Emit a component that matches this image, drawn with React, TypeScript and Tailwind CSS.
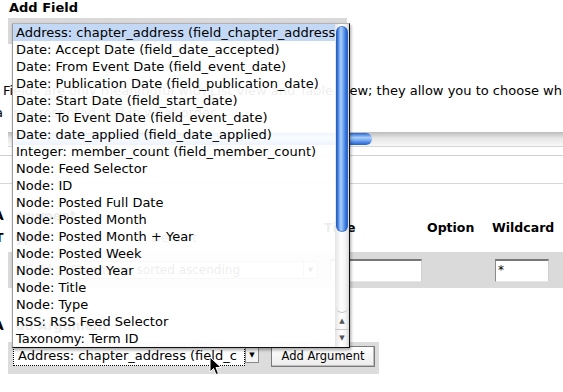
const items = [
  'Address: chapter_address (field_chapter_address)',
  'Date: Accept Date (field_date_accepted)',
  'Date: From Event Date (field_event_date)',
  'Date: Publication Date (field_publication_date)',
  'Date: Start Date (field_start_date)',
  'Date: To Event Date (field_event_date)',
  'Date: date_applied (field_date_applied)',
  'Integer: member_count (field_member_count)',
  'Node: Feed Selector',
  'Node: ID',
  'Node: Posted Full Date',
  'Node: Posted Month',
  'Node: Posted Month + Year',
  'Node: Posted Week',
  'Node: Posted Year',
  'Node: Title',
  'Node: Type',
  'RSS: RSS Feed Selector',
  'Taxonomy: Term ID',
]

const aquaV =
  'bg-[linear-gradient(to_right,#2a62cc_0%,#5f98ea_18%,#acccf8_38%,#7fb0f2_58%,#3f7fe0_82%,#2860c8_100%)]'
const aquaH =
  'bg-[linear-gradient(to_bottom,#2a62cc_0%,#5f98ea_18%,#acccf8_38%,#7fb0f2_58%,#3f7fe0_82%,#2860c8_100%)]'

const inset =
  'bg-white border-t-2 border-l border-t-[#777] border-l-[#8a8a8a] border-r border-b border-r-[#cfcfcf] border-b-[#e6e6e6]'

function Cursor() {
  return (
    <svg className="absolute left-[209px] top-[356px]" width="13" height="20" viewBox="0 0 13 20">
      <path d="M1 1 L1 16 L4.5 12.5 L7 18.5 L9.5 17.5 L7 11.5 L12 11.5 Z" fill="#000" stroke="#fff" strokeWidth="1" strokeLinejoin="round" />
    </svg>
  )
}

function ListPopup() {
  return (
    <div className="absolute left-[12px] top-[23px] w-[338px] h-[325px] flex border-l border-t border-l-[#9c9c9c] border-t-[#b4b4b4] border-r border-b border-r-[#111] border-b-[#111] bg-white/[0.93] shadow-[1px_2px_3px_rgba(0,0,0,0.35)]">
      {/* options */}
      <ul className="flex-1 overflow-hidden text-[13px] leading-[17px] text-black">
        {items.map((label, i) => (
          <li
            key={label}
            className={`h-[17px] pl-[3px] whitespace-nowrap ${i === 0 ? 'bg-[#c3d8f5]' : ''}`}
          >
            {label}
          </li>
        ))}
      </ul>

      {/* scrollbar */}
      <div className="w-[14px] flex flex-col bg-[linear-gradient(to_right,#e4e4e4,#ffffff_45%,#f4f4f4_75%,#d8d8d8)]">
        <div className="pt-[2px] px-[1px]">
          <div className={`h-[206px] rounded-full ${aquaV} border border-[#2a5fb8]/60`} />
        </div>
        <div className="flex-1 mx-[1px] rounded-b-full border-b border-[#c4c4c4]" />
        <div className="h-[16px] flex items-center justify-center text-[7px] text-[#555]">▲</div>
        <div className="h-px bg-[#c8c8c8]" />
        <div className="h-[17px] flex items-center justify-center text-[7px] text-[#555]">▼</div>
      </div>
    </div>
  )
}

export default function App() {
  return (
    <div className="relative w-[563px] h-[392px] overflow-hidden bg-white text-black font-['DejaVu_Sans',sans-serif]">
      {/* Add Field */}
      <h2 className="pl-[9px] h-[18px] text-[13px] leading-[15px] font-bold">Add Field</h2>
      <div className="ml-[8px] w-[339px] h-[26px] bg-[#d9d9d9]" />

      {/* description */}
      <div className="mt-[36px] pl-[3px] text-[13px] leading-[22px] whitespace-nowrap">
        <p>Fields are only meaningful with List view and Table View; they allow you to choose which fields are shown</p>
        <p className="ml-[-8px]">
          a<span className="ml-[10px]">re presented and in what order.</span>
        </p>
      </div>

      {/* horizontal scroller */}
      <div className="mt-[8px] ml-[8px] h-[15px] flex items-center border-b border-[#d6d6d6] bg-[linear-gradient(to_bottom,#bcbcbc,#e6e6e6_45%,#f8f8f8)]">
        <div className={`ml-[6px] w-[358px] h-[12px] rounded-r-full ${aquaH}`} />
      </div>

      <div className="mt-[8px] h-px bg-[#d0d0d0]" />
      <div className="mt-[27px] h-px bg-[#d8d8d8]" />

      {/* arguments table header */}
      <div className="mt-[21px] flex items-center text-[12.5px] font-bold leading-[15px]">
        <div className="w-[324px] leading-[22px]">
          <div className="ml-[-6px]">
            A<span className="ml-[12px]">rgument</span>
          </div>
          <div className="ml-[-5px]">
            T<span className="ml-[12px]">ype</span>
            <span className="ml-[110px] font-normal text-[#333]">Default</span>
          </div>
        </div>
        <div className="w-[103px]">Title</div>
        <div className="w-[65px]">Option</div>
        <div>Wildcard</div>
      </div>

      {/* arguments row */}
      <div className="mt-[3px] ml-[8px] h-[36px] bg-[#dadada] flex items-center text-[12px]">
        <div className="w-[58px] pl-[8px]">- Field</div>
        <div className="w-[258px]">
          <div className="flex h-[18px] w-[252px] border border-[#9a9a9a] bg-white">
            <span className="flex-1 pl-[4px] leading-[16px]">Summary, sorted ascending</span>
            <span className="w-[14px] border-l border-[#9a9a9a] text-[7px] flex items-center justify-center">▼</span>
          </div>
        </div>
        <div className="w-[103px] pt-[1px]">
          <div className={`h-[23px] ml-[6px] w-[92px] ${inset}`} />
        </div>
        <div className="w-[65px]" />
        <div className="pt-[1px]">
          <div className={`h-[23px] ml-[3px] w-[54px] pl-[2px] leading-[18px] text-[12px] ${inset}`}>*</div>
        </div>
      </div>

      {/* add argument */}
      <div className="mt-[30px] ml-[-6px] text-[12.5px] font-bold leading-[15px]">
        A<span className="ml-[12px]">dd Argument</span>
      </div>
      <div className="mt-[9px] ml-[8px] w-[371px] h-[32px] bg-[#dcdcdc] flex items-start pt-[4px] pl-[5px] gap-[12px]">
        <div className="flex h-[20px]">
          <div className="w-[232px] border border-dotted border-black bg-white pl-[4px] text-[13px] leading-[18px] whitespace-nowrap overflow-hidden">
            Address: chapter_address (field_c
          </div>
          <div className="w-[14px] mt-[1px] h-[16px] border border-[#8a8a8a] bg-[#f4f4f4] text-[7px] flex items-center justify-center">
            ▼
          </div>
        </div>
        <button className="w-[104px] h-[21px] border border-[#7a7a7a] bg-[linear-gradient(to_bottom,#ffffff,#ececec)] text-[11.5px] leading-[19px] shadow-[inset_-1px_-1px_0_#bdbdbd]">
          Add Argument
        </button>
      </div>

      <ListPopup />
      <Cursor />
    </div>
  )
}
